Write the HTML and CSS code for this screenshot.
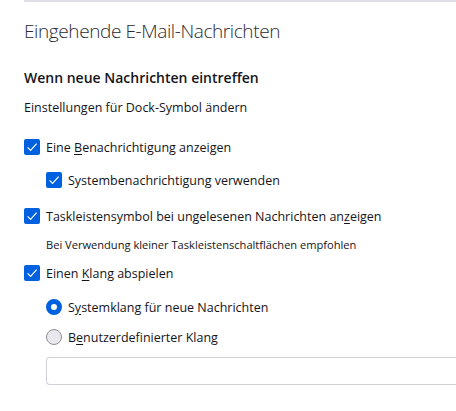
FILE: index.html
```html
<!DOCTYPE html>
<html lang="de">
<head>
<meta charset="utf-8">
<link rel="stylesheet" href="styles.css">
</head>
<body>
<div class="page">
  <div class="rule"></div>
  <h1 class="title">Eingehende E-Mail-Nachrichten</h1>
  <h2 class="subtitle">Wenn neue Nachrichten eintreffen</h2>
  <p class="link">Einstellungen für Dock-Symbol ändern</p>

  <div class="row r1">
    <span class="check"><svg viewBox="0 0 16 16" width="16" height="16"><path d="M3.6 8.3 L6.6 11.3 L12.6 4.6" fill="none" stroke="#fff" stroke-width="1.2"/></svg></span>
    <span class="label">Eine <u>B</u>enachrichtigung anzeigen</span>
  </div>
  <div class="row r2 indent">
    <span class="check"><svg viewBox="0 0 16 16" width="16" height="16"><path d="M3.6 8.3 L6.6 11.3 L12.6 4.6" fill="none" stroke="#fff" stroke-width="1.2"/></svg></span>
    <span class="label">Systembenachrichtigung verwenden</span>
  </div>
  <div class="row r3">
    <span class="check"><svg viewBox="0 0 16 16" width="16" height="16"><path d="M3.6 8.3 L6.6 11.3 L12.6 4.6" fill="none" stroke="#fff" stroke-width="1.2"/></svg></span>
    <span class="label">Taskleistensymbol bei ungelesenen Nachrichten an<u>z</u>eigen</span>
  </div>
  <p class="hint">Bei Verwendung kleiner Taskleistenschaltflächen empfohlen</p>
  <div class="row r4">
    <span class="check"><svg viewBox="0 0 16 16" width="16" height="16"><path d="M3.6 8.3 L6.6 11.3 L12.6 4.6" fill="none" stroke="#fff" stroke-width="1.2"/></svg></span>
    <span class="label">Einen <u>K</u>lang abspielen</span>
  </div>
  <div class="row r5 indent">
    <span class="radio on"></span>
    <span class="label">S<u>y</u>stemklang für neue Nachrichten</span>
  </div>
  <div class="row r6 indent">
    <span class="radio"></span>
    <span class="label">B<u>e</u>nutzerdefinierter Klang</span>
  </div>
  <div class="field indent"></div>
</div>
</body>
</html>
```

FILE: styles.css
```css
html, body {
  margin: 0;
  padding: 0;
  background: #ffffff;
}
body {
  font-family: "Open Sans", "Noto Sans", sans-serif;
  color: #15141a;
  overflow: hidden;
}
.page {
  padding-left: 24px;
}
.rule {
  height: 2px;
  background: #e0e0e6;
}
.title {
  margin: 15px 0 0;
  font-size: 19px;
  font-weight: 300;
  line-height: 28px;
  letter-spacing: -0.4px;
  color: #2b2a33;
}
.subtitle {
  margin: 23px 0 0;
  font-size: 14px;
  font-weight: 600;
  line-height: 20px;
}
.link {
  margin: 10px 0 0;
  font-size: 12.5px;
  line-height: 20px;
}
.row {
  display: flex;
  align-items: center;
  gap: 6px;
  height: 20px;
  font-size: 12.5px;
}
.indent {
  margin-left: 22px;
}
.r1 { margin-top: 19px; }
.r2 { margin-top: 13px; }
.r3 { margin-top: 16px; }
.r4 { margin-top: 8px; }
.r5 { margin-top: 14px; }
.r6 { margin-top: 10px; }
.hint {
  margin: 9px 0 0 22px;
  font-size: 11.1px;
  line-height: 20px;
}
.check {
  width: 16px;
  height: 16px;
  border-radius: 2px;
  background: #0061e0;
  display: flex;
  flex: none;
}
.radio {
  width: 16px;
  height: 16px;
  box-sizing: border-box;
  border-radius: 50%;
  border: 1px solid #8f8f9d;
  background: #e9e9ed;
  flex: none;
}
.radio.on {
  border: 5px solid #0061e0;
  background: #ffffff;
}
.label u {
  text-underline-offset: 2px;
}
.field {
  margin-top: 10px;
  height: 28px;
  box-sizing: border-box;
  border: 1px solid #d0d0d7;
  border-right: none;
  border-radius: 4px 0 0 4px;
}
```
